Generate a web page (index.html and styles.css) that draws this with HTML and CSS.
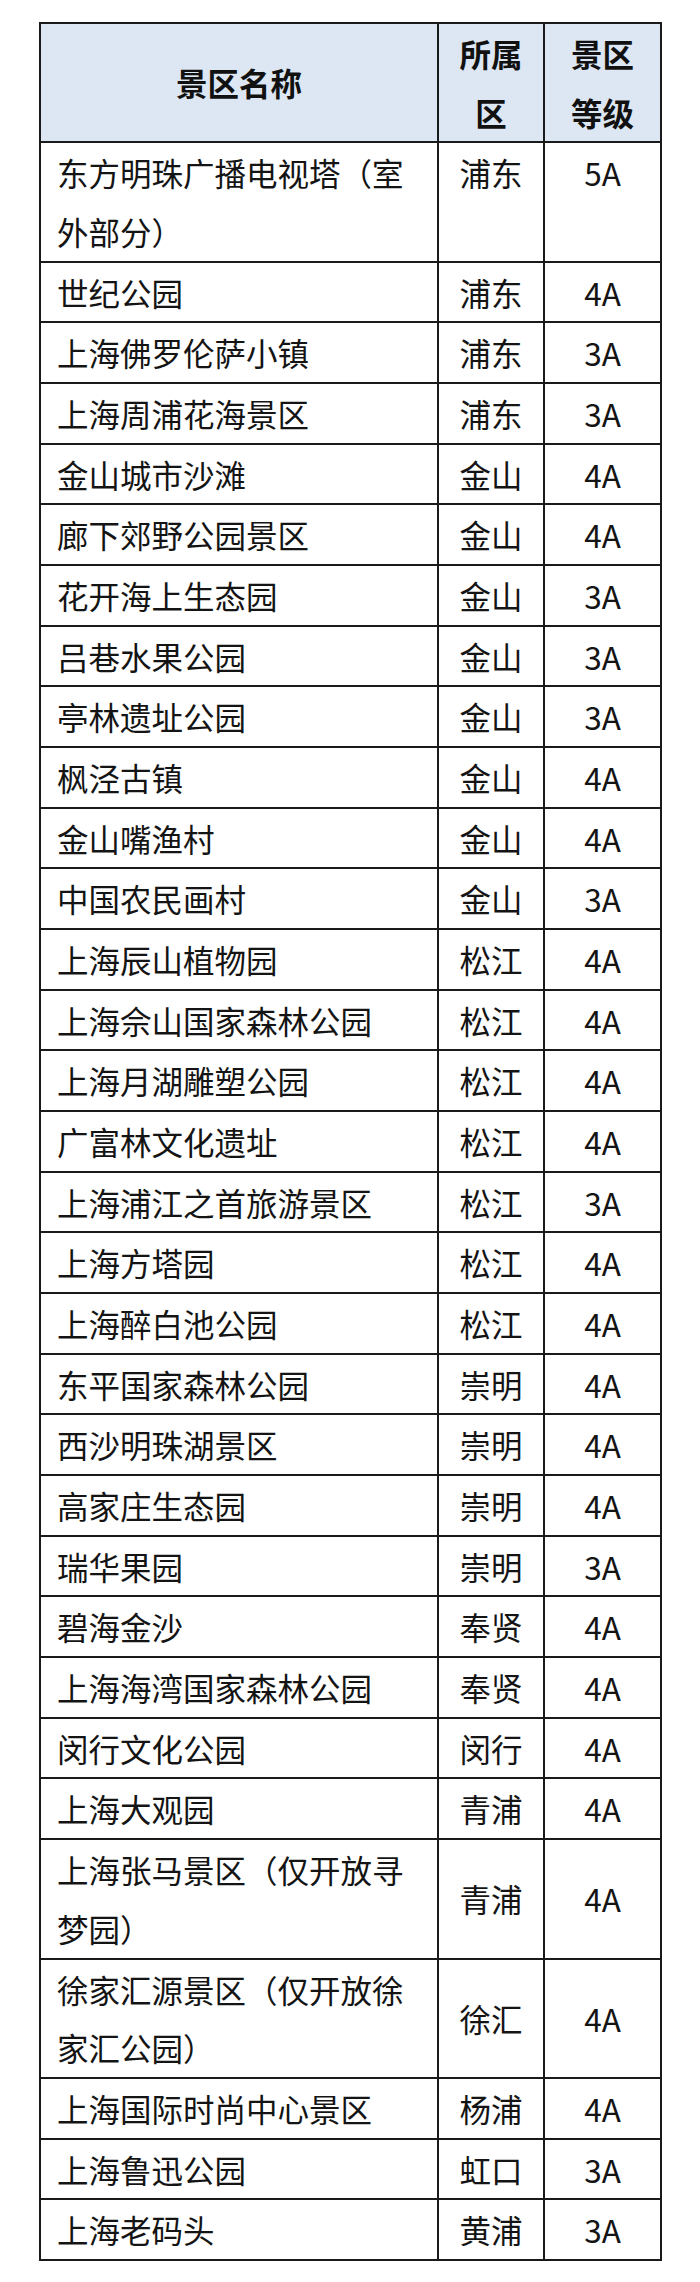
FILE: index.html
```html
<!DOCTYPE html>
<html lang="zh-CN">
<head>
<meta charset="utf-8">
<title>景区名单</title>
<link rel="stylesheet" href="styles.css">
</head>
<body>
<table class="scenic">
  <colgroup>
    <col class="c-name">
    <col class="c-dist">
    <col class="c-level">
  </colgroup>
  <thead>
    <tr><th>景区名称</th><th>所属区</th><th>景区等级</th></tr>
  </thead>
  <tbody>
    <tr class="top"><td>东方明珠广播电视塔（室外部分）</td><td>浦东</td><td>5A</td></tr>
    <tr><td>世纪公园</td><td>浦东</td><td>4A</td></tr>
    <tr><td>上海佛罗伦萨小镇</td><td>浦东</td><td>3A</td></tr>
    <tr><td>上海周浦花海景区</td><td>浦东</td><td>3A</td></tr>
    <tr><td>金山城市沙滩</td><td>金山</td><td>4A</td></tr>
    <tr><td>廊下郊野公园景区</td><td>金山</td><td>4A</td></tr>
    <tr><td>花开海上生态园</td><td>金山</td><td>3A</td></tr>
    <tr><td>吕巷水果公园</td><td>金山</td><td>3A</td></tr>
    <tr><td>亭林遗址公园</td><td>金山</td><td>3A</td></tr>
    <tr><td>枫泾古镇</td><td>金山</td><td>4A</td></tr>
    <tr><td>金山嘴渔村</td><td>金山</td><td>4A</td></tr>
    <tr><td>中国农民画村</td><td>金山</td><td>3A</td></tr>
    <tr><td>上海辰山植物园</td><td>松江</td><td>4A</td></tr>
    <tr><td>上海佘山国家森林公园</td><td>松江</td><td>4A</td></tr>
    <tr><td>上海月湖雕塑公园</td><td>松江</td><td>4A</td></tr>
    <tr><td>广富林文化遗址</td><td>松江</td><td>4A</td></tr>
    <tr><td>上海浦江之首旅游景区</td><td>松江</td><td>3A</td></tr>
    <tr><td>上海方塔园</td><td>松江</td><td>4A</td></tr>
    <tr><td>上海醉白池公园</td><td>松江</td><td>4A</td></tr>
    <tr><td>东平国家森林公园</td><td>崇明</td><td>4A</td></tr>
    <tr><td>西沙明珠湖景区</td><td>崇明</td><td>4A</td></tr>
    <tr><td>高家庄生态园</td><td>崇明</td><td>4A</td></tr>
    <tr><td>瑞华果园</td><td>崇明</td><td>3A</td></tr>
    <tr><td>碧海金沙</td><td>奉贤</td><td>4A</td></tr>
    <tr><td>上海海湾国家森林公园</td><td>奉贤</td><td>4A</td></tr>
    <tr><td>闵行文化公园</td><td>闵行</td><td>4A</td></tr>
    <tr><td>上海大观园</td><td>青浦</td><td>4A</td></tr>
    <tr><td>上海张马景区（仅开放寻梦园）</td><td>青浦</td><td>4A</td></tr>
    <tr><td>徐家汇源景区（仅开放徐家汇公园）</td><td>徐汇</td><td>4A</td></tr>
    <tr><td>上海国际时尚中心景区</td><td>杨浦</td><td>4A</td></tr>
    <tr><td>上海鲁迅公园</td><td>虹口</td><td>3A</td></tr>
    <tr><td>上海老码头</td><td>黄浦</td><td>3A</td></tr>
  </tbody>
</table>
</body>
</html>
```

FILE: styles.css
```css
html, body {
  margin: 0;
  padding: 0;
  background: #ffffff;
}

body {
  font-family: "Noto Sans CJK SC", "Noto Sans", sans-serif;
  color: #141414;
}

.scenic {
  border-collapse: collapse;
  table-layout: fixed;
  width: 621px;
  margin: 22px 0 0 39px;
  font-size: 31.5px;
  line-height: 58.67px;
}

.c-name { width: 398px; }
.c-dist { width: 106px; }
.c-level { width: 117px; }

.scenic th,
.scenic td {
  border: 2px solid #1a1a1a;
  padding: 0 16px;
  vertical-align: middle;
}

.scenic th {
  background: #dce7f3;
  font-weight: 700;
  color: #111111;
  text-align: center;
}

.scenic td {
  font-weight: 400;
  text-align: center;
}

.scenic td:first-child {
  text-align: left;
}

.scenic tr.top td {
  vertical-align: top;
}
```
